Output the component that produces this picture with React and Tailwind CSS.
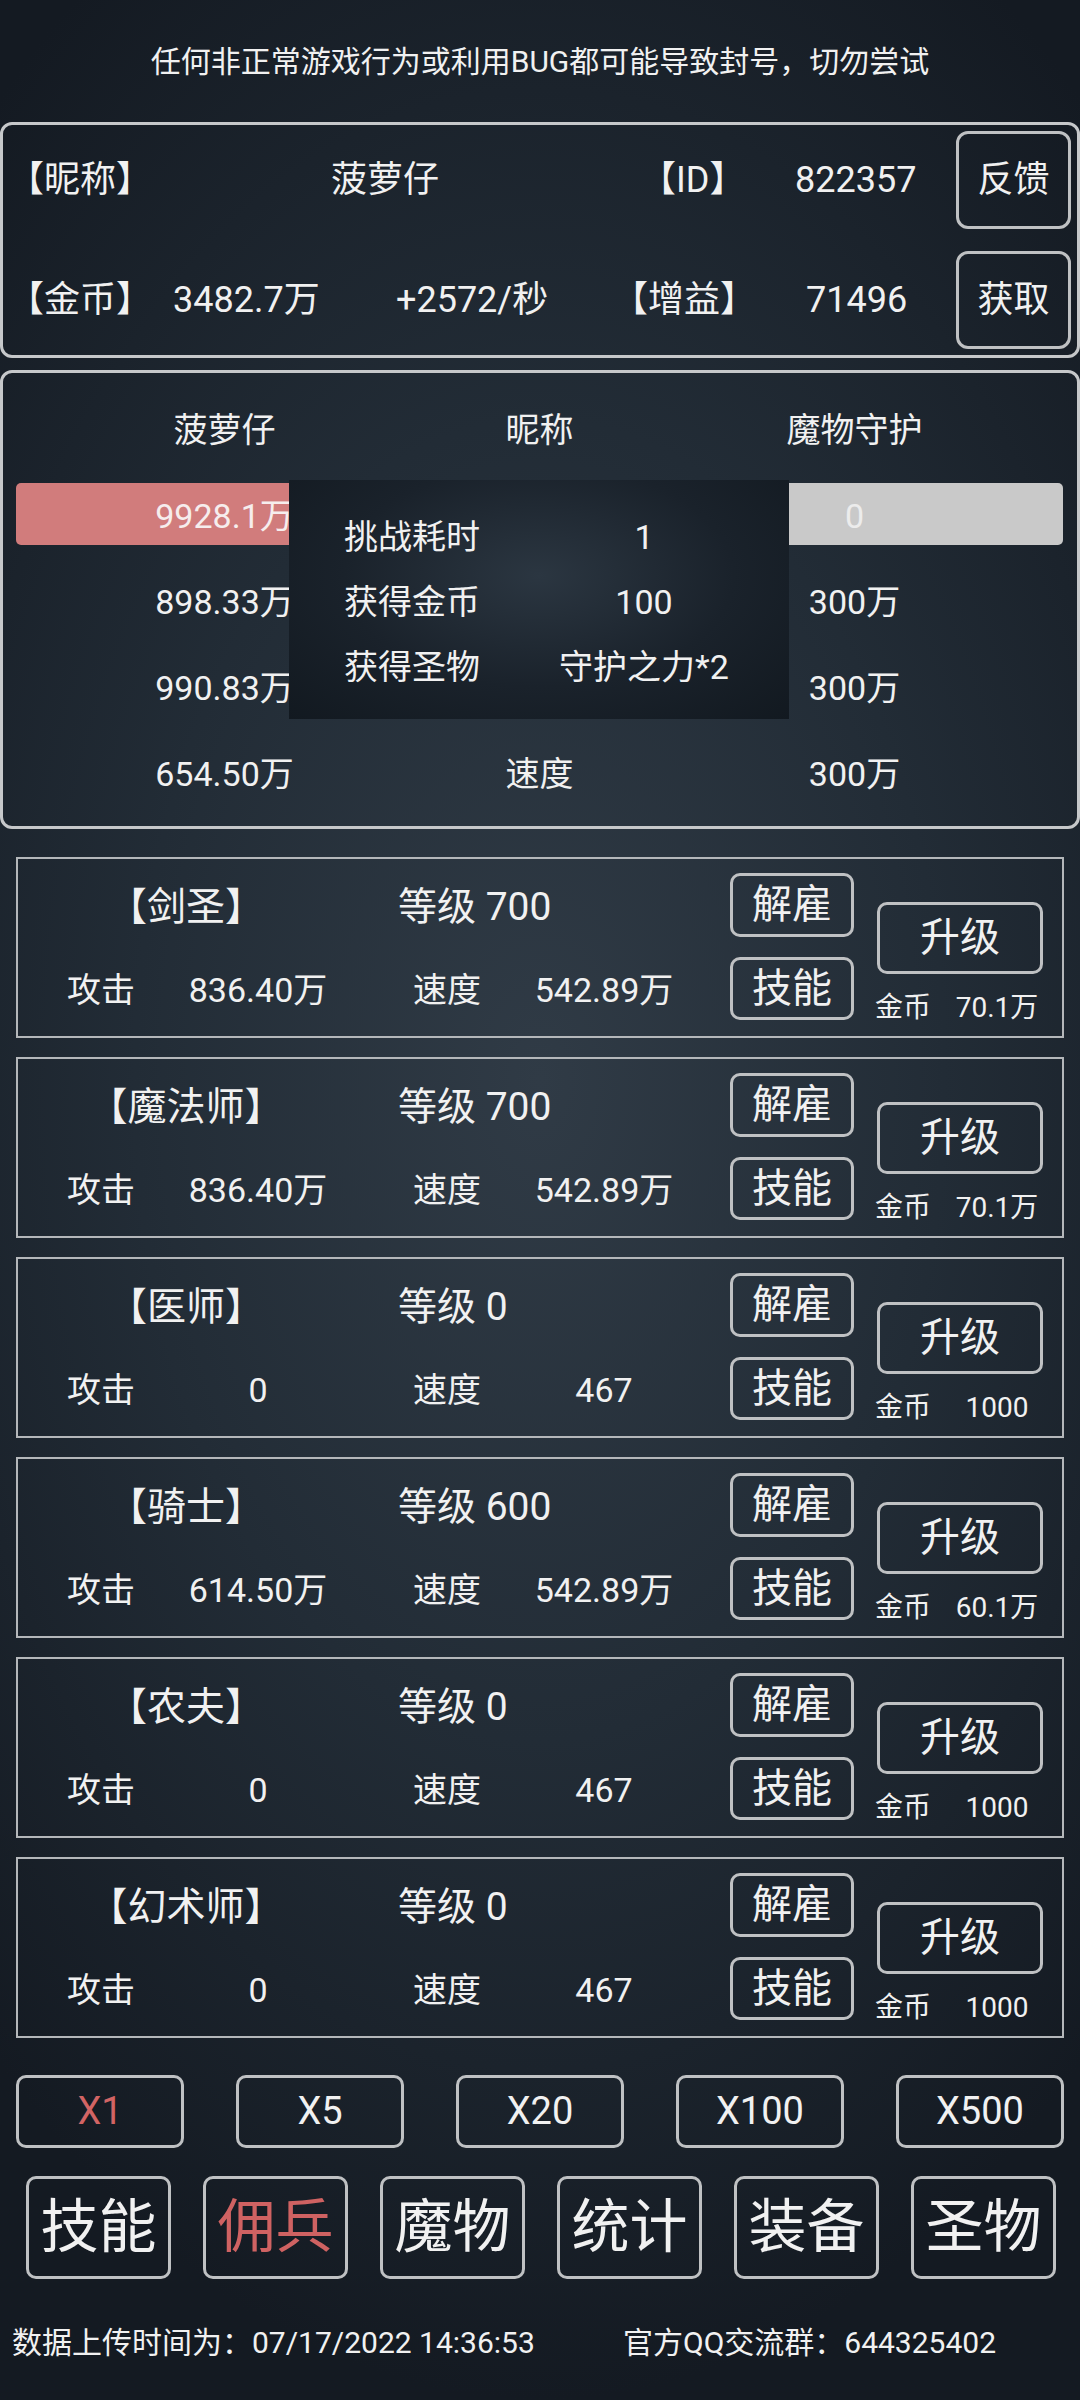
import React from "react";

const heroes = [
  { name: "【剑圣】", lv: "700", atk: "836.40万", spd: "542.89万", cost: "70.1万" },
  { name: "【魔法师】", lv: "700", atk: "836.40万", spd: "542.89万", cost: "70.1万" },
  { name: "【医师】", lv: "0", atk: "0", spd: "467", cost: "1000" },
  { name: "【骑士】", lv: "600", atk: "614.50万", spd: "542.89万", cost: "60.1万" },
  { name: "【农夫】", lv: "0", atk: "0", spd: "467", cost: "1000" },
  { name: "【幻术师】", lv: "0", atk: "0", spd: "467", cost: "1000" },
];

function HeroCard({ h }) {
  return (
    <div className="h-[181px] w-[1048px] border-2 border-[#b4b7ba] flex">
      <div className="w-[712px] flex flex-col pt-[18px]">
        <div className="h-[60px] flex items-center text-[39px]">
          <div className="w-[336px] text-center">{h.name}</div>
          <div className="ml-[44px] whitespace-pre">{"等级 " + h.lv}</div>
        </div>
        <div className="h-[60px] mt-[23px] flex items-center text-[34px]">
          <div className="w-[49px]" />
          <div className="w-[68px]">攻击</div>
          <div className="w-[246px] text-center">{h.atk}</div>
          <div className="w-[32px]" />
          <div className="w-[68px]">速度</div>
          <div className="w-[246px] text-center">{h.spd}</div>
        </div>
      </div>
      <div className="w-[124px] flex flex-col">
        <div className="mt-[14px] h-[64px] rounded-[10px] border-[3px] border-[#bfc1c3] flex items-center justify-center text-[40px]">解雇</div>
        <div className="mt-[20px] h-[63px] rounded-[10px] border-[3px] border-[#bfc1c3] flex items-center justify-center text-[40px]">技能</div>
      </div>
      <div className="ml-[23px] w-[166px] flex flex-col">
        <div className="mt-[43px] h-[72px] rounded-[10px] border-[3px] border-[#bfc1c3] flex items-center justify-center text-[40px]">升级</div>
        <div className="mt-[14px] h-[40px] -ml-[2px] w-[188px] flex items-center text-[28px]">
          <div className="w-[56px]">金币</div>
          <div className="w-[132px] text-center">{h.cost}</div>
        </div>
      </div>
    </div>
  );
}

export default function App() {
  return (
    <div className="w-[1080px] h-[2400px] overflow-hidden text-[#f1f1f1] [text-spacing-trim:space-all] font-['Roboto','Noto_Sans_CJK_SC',sans-serif] bg-[radial-gradient(ellipse_75%_55%_at_50%_45%,#303b46_0%,#222c36_50%,#141a22_100%)]">
      <div className="h-[122px] flex items-center justify-center text-[30px]">
        任何非正常游戏行为或利用BUG都可能导致封号，切勿尝试
      </div>

      <div className="h-[236px] border-[3px] border-[#c6c8ca] rounded-[12px] flex flex-col">
        <div className="h-[110px] flex items-center text-[36px]">
          <div className="w-[5px]" />
          <div className="w-[323px]">【昵称】</div>
          <div className="w-[309px]">菠萝仔</div>
          <div className="w-[155px]">【ID】</div>
          <div className="flex-1">822357</div>
          <div className="mr-[6px] w-[115px] h-[98px] rounded-[12px] border-[3px] border-[#bfc1c3] flex items-center justify-center">反馈</div>
        </div>
        <div className="h-[110px] mt-[10px] flex items-center text-[36px]">
          <div className="w-[5px]" />
          <div className="w-[165px]">【金币】</div>
          <div className="w-[223px]">3482.7万</div>
          <div className="w-[216px]">+2572/秒</div>
          <div className="w-[194px]">【增益】</div>
          <div className="flex-1">71496</div>
          <div className="mr-[6px] w-[115px] h-[98px] rounded-[12px] border-[3px] border-[#bfc1c3] flex items-center justify-center">获取</div>
        </div>
      </div>

      <div className="relative mt-[12px] h-[459px] border-[3px] border-[#c6c8ca] rounded-[12px] pt-[14px] text-[34px]">
        <div className="h-[86px] ml-[64px] grid grid-cols-[315px_315px_315px] items-center text-center">
          <div>菠萝仔</div>
          <div>昵称</div>
          <div>魔物守护</div>
        </div>
        <div className="relative h-[86px] pt-[10px]">
          <div className="flex h-[62px] ml-[13px] mr-[14px]">
            <div className="flex-1 bg-[#d17c7c] rounded-l-[5px]" />
            <div className="flex-1 bg-[#c9c9c9] rounded-r-[5px]" />
          </div>
          <div className="absolute inset-0 ml-[64px] grid grid-cols-[315px_315px_315px] items-center text-center">
            <div className="text-[#f6eded]">9928.1万</div>
            <div />
            <div className="text-[#ececec]">0</div>
          </div>
        </div>
        <div className="h-[86px] ml-[64px] grid grid-cols-[315px_315px_315px] items-center text-center">
          <div>898.33万</div>
          <div />
          <div>300万</div>
        </div>
        <div className="h-[86px] ml-[64px] grid grid-cols-[315px_315px_315px] items-center text-center">
          <div>990.83万</div>
          <div />
          <div>300万</div>
        </div>
        <div className="h-[86px] ml-[64px] grid grid-cols-[315px_315px_315px] items-center text-center">
          <div>654.50万</div>
          <div>速度</div>
          <div>300万</div>
        </div>

        <div className="absolute left-[286px] top-[107px] w-[500px] h-[239px] pt-[25px] pl-[55px] bg-[radial-gradient(ellipse_at_50%_40%,#2b3641_0%,#1a222b_55%,#121920_100%)]">
          <div className="h-[65px] grid grid-cols-[136px_328px] items-center">
            <div>挑战耗时</div>
            <div className="text-center">1</div>
          </div>
          <div className="h-[65px] grid grid-cols-[136px_328px] items-center">
            <div>获得金币</div>
            <div className="text-center">100</div>
          </div>
          <div className="h-[65px] grid grid-cols-[136px_328px] items-center">
            <div>获得圣物</div>
            <div className="text-center">守护之力*2</div>
          </div>
        </div>
      </div>

      <div className="mt-[28px] ml-[16px] flex flex-col gap-[19px]">
        {heroes.map((h, i) => (
          <HeroCard key={i} h={h} />
        ))}
      </div>

      <div className="mt-[37px] ml-[16px] flex gap-[52px] text-[38px]">
        {["X1", "X5", "X20", "X100", "X500"].map((x, i) => (
          <div
            key={x}
            className={
              "w-[168px] h-[73px] rounded-[10px] border-[3px] border-[#bfc1c3] flex items-center justify-center " +
              (i === 0 ? "text-[#d26464]" : "")
            }
          >
            {x}
          </div>
        ))}
      </div>

      <div className="mt-[28px] ml-[26px] flex gap-[32px] text-[58px]">
        {["技能", "佣兵", "魔物", "统计", "装备", "圣物"].map((x, i) => (
          <div
            key={x}
            className={
              "w-[145px] h-[103px] rounded-[10px] border-[3px] border-[#bfc1c3] flex items-center justify-center " +
              (i === 1 ? "text-[#cf6262]" : "")
            }
          >
            {x}
          </div>
        ))}
      </div>

      <div className="mt-[40px] h-[46px] flex items-center text-[30px] whitespace-pre">
        <div className="ml-[12px] w-[611px]">数据上传时间为：07/17/2022 14:36:53</div>
        <div>官方QQ交流群：644325402</div>
      </div>
    </div>
  );
}
